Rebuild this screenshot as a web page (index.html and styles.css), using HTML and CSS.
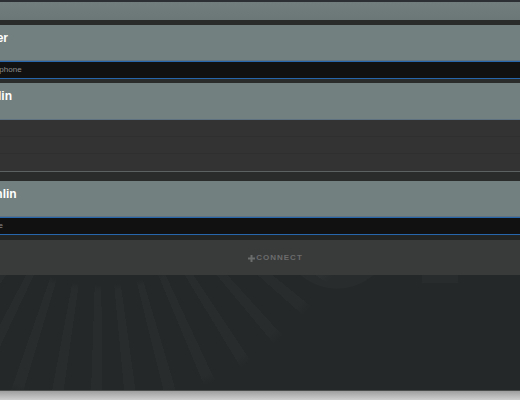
FILE: index.html
```html
<!DOCTYPE html>
<html>
<head>
<meta charset="utf-8">
<link rel="stylesheet" href="styles.css">
</head>
<body>
<div class="page">
  <div class="list">
    <div class="card card-partial"></div>
    <div class="gap gap-5"></div>
    <div class="card card-edged"><span class="name">Peter</span></div>
    <div class="sub"><span class="sub-text">Smartphone</span></div>
    <div class="gap gap-4"></div>
    <div class="card card-closed"><span class="name">Berlin</span></div>
    <div class="empty">
      <div class="empty-row"></div>
      <div class="empty-row"></div>
      <div class="empty-row"></div>
    </div>
    <div class="gap gap-9"></div>
    <div class="card card-edged"><span class="name">Mohlin</span></div>
    <div class="sub"><span class="sub-text">iPhone</span></div>
    <div class="gap gap-5 gap-dark"></div>
    <div class="connect">
      <svg class="plus" width="7" height="7" viewBox="0 0 7 7"><rect x="2.5" y="0" width="2" height="7" fill="#6b6c6c"/><rect x="0" y="2.5" width="7" height="2" fill="#6b6c6c"/></svg>
      <span class="connect-label">CONNECT</span>
    </div>
  </div>
  <div class="fill"></div>
  <div class="footer"></div>
</div>
</body>
</html>
```
FILE: styles.css
```css
html, body {
  margin: 0;
  padding: 0;
}
body {
  width: 520px;
  height: 400px;
  overflow: hidden;
  font-family: "Liberation Sans", Arial, sans-serif;
  background:
    radial-gradient(circle at 337px 233px, rgba(255,255,255,0.018) 0 55px, transparent 56px),
    linear-gradient(rgba(255,255,255,0.018), rgba(255,255,255,0.018)) 422px 200px / 36px 83px no-repeat,
    radial-gradient(circle at 100px 135px, #252829 0 150px, rgba(37,40,41,0) 156px 262px, #252829 272px),
    repeating-conic-gradient(from 179.5deg at 100px 135px, #292c2d 0deg 2.5deg, rgba(0,0,0,0) 2.5deg 8.6deg),
    #252829;
}
.page {
  height: 400px;
  display: flex;
  flex-direction: column;
}
.list {
  margin-left: -30px;
  width: 607px;
  display: flex;
  flex-direction: column;
  background: #2a2c2c;
}
.card {
  height: 36px;
  background: #738080;
  padding-left: 8px;
  display: flex;
  align-items: flex-start;
  box-sizing: border-box;
}
.card-partial {
  height: 20px;
  border-top: 2px solid #2c3035;
  background: linear-gradient(#727e7e, #6b7676);
}
.card-edged {
  border-bottom: 1px solid #5f7282;
}
.card-closed {
  height: 37px;
  border-bottom: 1px solid #5f7282;
}
.name {
  color: #ffffff;
  font-weight: bold;
  font-size: 12px;
  line-height: 14px;
  margin-top: 6px;
}
.sub {
  height: 18px;
  box-sizing: border-box;
  border-top: 1px solid #2766ab;
  border-bottom: 1px solid #2766ab;
  background: #111111;
  padding-left: 8px;
  display: flex;
  align-items: center;
}
.sub-text {
  color: #8e8e8e;
  font-size: 8px;
  line-height: 10px;
}
.gap-5 { height: 5px; }
.gap-4 { height: 4px; }
.gap-9 { height: 9px; }
.gap-dark { background: #222424; }
.empty {
  display: flex;
  flex-direction: column;
  background: #333333;
  border-bottom: 1px solid #5c6161;
}
.empty-row {
  height: 17px;
  box-sizing: border-box;
  border-bottom: 1px solid #2f2f2f;
}
.empty-row:last-child {
  border-bottom: none;
}
.connect {
  height: 35px;
  background: rgba(255,255,255,0.07);
  display: flex;
  align-items: center;
  justify-content: center;
  gap: 1px;
  padding-left: 4px;
}
.plus {
  display: block;
  margin-top: 1px;
}
.connect-label {
  color: #6b6c6c;
  font-size: 8px;
  font-weight: bold;
  letter-spacing: 1px;
  line-height: 10px;
}
.fill {
  flex: 1;
}
.footer {
  height: 10px;
  box-sizing: border-box;
  border-top: 1px solid #4a4c4c;
  background: linear-gradient(#9e9e9e, #cfcfcf);
}
```
